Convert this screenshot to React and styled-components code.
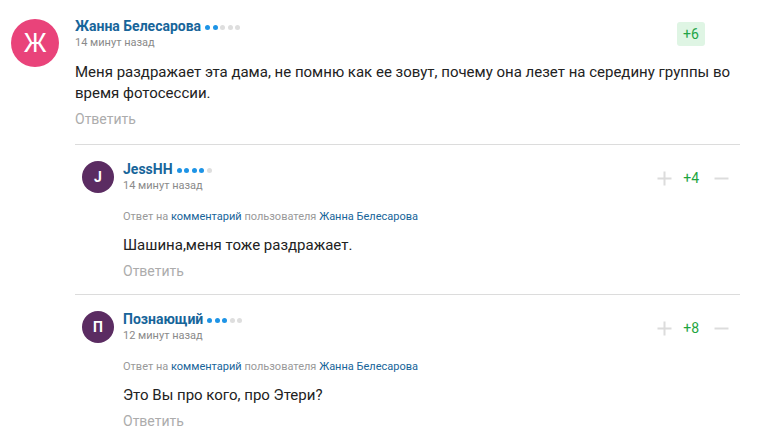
import React from "react";
import styled, { createGlobalStyle } from "styled-components";

const GlobalStyle = createGlobalStyle`
  * { box-sizing: border-box; }
  body {
    margin: 0;
    background: #fff;
    font-family: Roboto, "Liberation Sans", sans-serif;
    color: #222;
  }
`;

const replies = [
  {
    id: 1,
    name: "JessHH",
    letter: "J",
    rank: 4,
    time: "14 минут назад",
    text: "Шашина,меня тоже раздражает.",
    votes: "+4",
  },
  {
    id: 2,
    name: "Познающий",
    letter: "П",
    rank: 3,
    time: "12 минут назад",
    text: "Это Вы про кого, про Этери?",
    votes: "+8",
  },
];

function Rank({ value }) {
  return (
    <Dots>
      {[0, 1, 2, 3, 4].map((i) => (
        <Dot key={i} $on={i < value} />
      ))}
    </Dots>
  );
}

function PlusIcon() {
  return (
    <svg width="15" height="15" viewBox="0 0 15 15">
      <path d="M7.5 0.5v14M0.5 7.5h14" stroke="#dcdcdc" strokeWidth="2" />
    </svg>
  );
}

function MinusIcon() {
  return (
    <svg width="15" height="15" viewBox="0 0 15 15">
      <path d="M0.5 7.5h14" stroke="#dcdcdc" strokeWidth="2" />
    </svg>
  );
}

function Reply({ item }) {
  return (
    <ReplyRow>
      <Avatar $size={32} $bg="#5b2c62" $font={14}>
        {item.letter}
      </Avatar>
      <ReplyBody>
        <ReplyHead>
          <div>
            <NameLine>
              <Name>{item.name}</Name>
              <Rank value={item.rank} />
            </NameLine>
            <Time>{item.time}</Time>
          </div>
          <Votes>
            <PlusIcon />
            <VoteCount>{item.votes}</VoteCount>
            <MinusIcon />
          </Votes>
        </ReplyHead>
        <ReplyTo>
          Ответ на <Link>комментарий</Link> пользователя{" "}
          <Link>Жанна Белесарова</Link>
        </ReplyTo>
        <ReplyText>{item.text}</ReplyText>
        <Answer>Ответить</Answer>
      </ReplyBody>
    </ReplyRow>
  );
}

export default function App() {
  return (
    <>
      <GlobalStyle />
      <Comment>
        <Avatar $size={48} $bg="#e9437a" $font={25} $weight={400} $top={2}>
          Ж
        </Avatar>
        <Body>
          <Head>
            <div>
              <NameLine>
                <Name>Жанна Белесарова</Name>
                <Rank value={2} />
              </NameLine>
              <Time>14 минут назад</Time>
            </div>
            <Badge>+6</Badge>
          </Head>
          <Text>
            Меня раздражает эта дама, не помню как ее зовут, почему она лезет на
            середину группы во время фотосессии.
          </Text>
          <Answer>Ответить</Answer>
          <Replies>
            {replies.map((item) => (
              <Reply key={item.id} item={item} />
            ))}
          </Replies>
        </Body>
      </Comment>
    </>
  );
}

const Comment = styled.div`
  display: flex;
  align-items: flex-start;
  padding: 17px 18px 0 11px;
`;

const Avatar = styled.div`
  flex: none;
  width: ${(p) => p.$size}px;
  height: ${(p) => p.$size}px;
  margin-top: ${(p) => p.$top || 0}px;
  border-radius: 50%;
  background: ${(p) => p.$bg};
  color: #fff;
  display: flex;
  align-items: center;
  justify-content: center;
  font-size: ${(p) => p.$font}px;
  font-weight: ${(p) => p.$weight || 700};
`;

const Body = styled.div`
  flex: 1;
  margin-left: 16px;
  min-width: 0;
`;

const Head = styled.div`
  display: flex;
  justify-content: space-between;
  align-items: flex-start;
`;

const NameLine = styled.div`
  display: flex;
  align-items: center;
  height: 18px;
`;

const Name = styled.span`
  font-size: 14px;
  line-height: 18px;
  font-weight: 700;
  color: #17659a;
`;

const Dots = styled.span`
  display: inline-flex;
  gap: 2.5px;
  margin-left: 4px;
  margin-top: 3px;
`;

const Dot = styled.span`
  width: 5px;
  height: 5px;
  border-radius: 50%;
  background: ${(p) => (p.$on ? "#1e94e6" : "#dedede")};
`;

const Time = styled.div`
  font-size: 11px;
  line-height: 16px;
  color: #8a8a8a;
`;

const Badge = styled.div`
  margin: 5px 35px 0 0;
  width: 28px;
  height: 24px;
  border-radius: 3px;
  background: #dff5e4;
  color: #22a447;
  font-size: 14px;
  display: flex;
  align-items: center;
  justify-content: center;
`;

const Text = styled.div`
  margin-top: 11px;
  font-size: 15px;
  line-height: 21px;
  color: #222;
`;

const Answer = styled.div`
  margin-top: 6px;
  font-size: 14px;
  line-height: 18px;
  color: #acacac;
`;

const Replies = styled.div`
  margin-top: 16px;
`;

const ReplyRow = styled.div`
  display: flex;
  align-items: flex-start;
  border-top: 1px solid #dcdcdc;
  padding: 16px 0 14px 7px;
`;

const ReplyBody = styled.div`
  flex: 1;
  margin-left: 9px;
  margin-top: -1px;
`;

const ReplyHead = styled.div`
  display: flex;
  justify-content: space-between;
  align-items: center;
`;

const Votes = styled.div`
  display: flex;
  align-items: center;
  margin-right: 11px;
  margin-top: 2px;
`;

const VoteCount = styled.span`
  margin: 0 15px 0 11px;
  font-size: 14px;
  color: #1ea53f;
`;

const ReplyTo = styled.div`
  margin-top: 16px;
  font-size: 11px;
  line-height: 14px;
  color: #999;
`;

const Link = styled.span`
  color: #17659a;
`;

const ReplyText = styled.div`
  margin-top: 11px;
  font-size: 15px;
  line-height: 21px;
  color: #222;
`;
